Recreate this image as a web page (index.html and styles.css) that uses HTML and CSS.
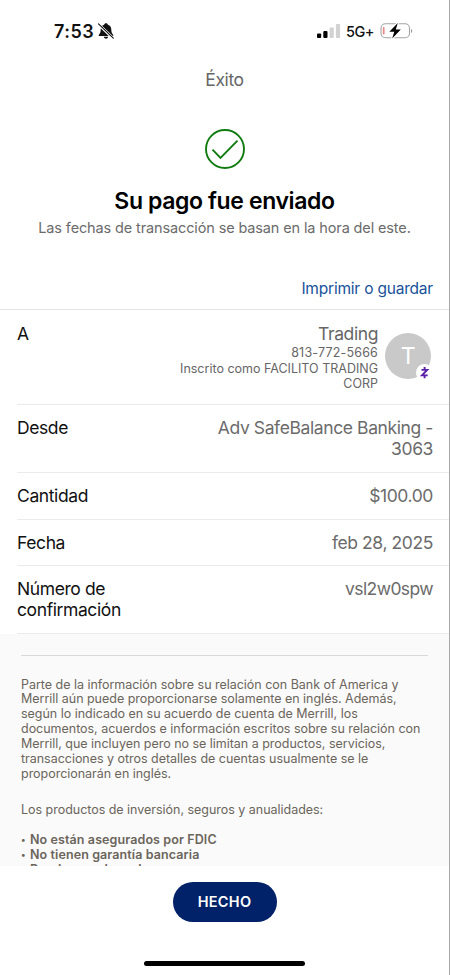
FILE: index.html
```html
<!DOCTYPE html>
<html lang="es">
<head>
<meta charset="utf-8">
<title>Éxito</title>
<link rel="stylesheet" href="styles.css">
</head>
<body>
<div class="phone">
  <header class="status">
    <span class="time">7:53</span>
    <svg class="bell" width="18" height="18" viewBox="0 0 18 18">
      <path d="M9 1.200c-1 0-1.700.6-1.900 1.500C4.800 3.400 3.700 5.200 3.700 7.500c0 3-.7 4-1.800 5.200-.5.6-.2 1.400.6 1.400h13c.8 0 1.100-.8.6-1.400C15 11.500 14.300 10.500 14.300 7.500c0-2.300-1.100-4.100-3.400-4.800C10.700 1.800 10 1.200 9 1.200zM6.800 14.800h4.400c-.1 1.100-1.100 1.900-2.200 1.900s-2.100-.8-2.200-1.900z" fill="#111"/>
      <path d="M1.500 2.200l14.800 14.300" stroke="#fff" stroke-width="2.800"/>
      <path d="M1.500 1.900l14.800 14.300" stroke="#111" stroke-width="1.100" stroke-linecap="round"/>
    </svg>
    <svg class="signal" width="24" height="16" viewBox="0 0 24 16">
      <rect x="0" y="10.500" width="4.200" height="4.500" rx="1" fill="#000"/>
      <rect x="6.300" y="8" width="4.200" height="7" rx="1" fill="#000"/>
      <rect x="12.600" y="4.500" width="4.200" height="10.500" rx="1" fill="#d2d2d2"/>
      <rect x="18.900" y="1" width="4.200" height="14" rx="1" fill="#d2d2d2"/>
    </svg>
    <span class="net">5G+</span>
    <svg class="battery" width="34" height="18" viewBox="0 0 34 18">
      <rect x="1" y="1.800" width="28.500" height="14" rx="4.500" fill="#fff" stroke="#a4a4a4" stroke-width="1.100"/>
      <path d="M31 7v4c1.600-.6 1.600-3.400 0-4z" fill="#999"/>
      <rect x="2.800" y="5" width="1.800" height="7.500" rx=".8" fill="#ee8b8b"/>
      <path d="M17.800 1L9.300 9.800h5L12.200 16.500 20.800 7.600h-5z" fill="#000" stroke="#fff" stroke-width="2.400" paint-order="stroke"/>
    </svg>
  </header>

  <div class="title"><span>Éxito</span></div>

  <section class="hero">
    <svg class="check" width="40" height="40" viewBox="0 0 40 40" fill="none" stroke="#107c10" stroke-width="1.900">
      <circle cx="20" cy="20" r="19"/>
      <path d="M7.500 20.700l8 8.100L32.500 11.700"/>
    </svg>
    <h1>Su pago fue enviado</h1>
    <p>Las fechas de transacción se basan en la hora del este.</p>
  </section>

  <div class="actions"><a>Imprimir o guardar</a></div>

  <main class="rows">
    <div class="row payee">
      <span class="label">A</span>
      <div class="who">
        <span class="name">Trading</span>
        <span class="num">813-772-5666</span>
        <span class="reg">Inscrito como FACILITO TRADING<br>CORP</span>
      </div>
      <div class="avatar">T
        <svg class="badge" width="17" height="17" viewBox="0 0 17 17">
          <circle cx="8.500" cy="8.500" r="8.500" fill="#fff"/>
          <path d="M5.500 5.900h5.700L6 11.400h5.700M8.600 3v2.900M8.600 11.400v2.900" fill="none" stroke="#5b21a8" stroke-width="1.900"/>
        </svg>
      </div>
    </div>
    <div class="row from"><span class="label">Desde</span><span class="value acct">Adv SafeBalance Banking -<br>3063</span></div>
    <div class="row"><span class="label">Cantidad</span><span class="value">$100.00</span></div>
    <div class="row"><span class="label">Fecha</span><span class="value date">feb 28, 2025</span></div>
    <div class="row conf"><span class="label">Número de<br>confirmación</span><span class="value code">vsl2w0spw</span></div>
  </main>

  <section class="legal">
    <hr>
    <p>Parte de la información sobre su relación con Bank of America y<br>Merrill aún puede proporcionarse solamente en inglés. Además,<br>según lo indicado en su acuerdo de cuenta de Merrill, los<br>documentos, acuerdos e información escritos sobre su relación con<br>Merrill, que incluyen pero no se limitan a productos, servicios,<br>transacciones y otros detalles de cuentas usualmente se le<br>proporcionarán en inglés.</p>
    <p>Los productos de inversión, seguros y anualidades:</p>
    <ul>
      <li>No están asegurados por FDIC</li>
      <li>No tienen garantía bancaria</li>
      <li>Pueden perder valor</li>
    </ul>
  </section>

  <footer class="bottom">
    <button>HECHO</button>
    <div class="home"></div>
  </footer>
</div>
</body>
</html>
```
FILE: styles.css
```css
* { box-sizing: border-box; }
body { margin: 0; background: #fff; font-family: Inter, "Liberation Sans", sans-serif; }
.phone {
  width: 450px; height: 975px; overflow: hidden;
  display: flex; flex-direction: column;
  border-right: 1px solid #a9a9a9; color: #111; white-space: nowrap;
}
.status { height: 62px; flex: none; display: flex; align-items: center; padding: 0 35px 0 54px; }
.time { font-size: 18px; font-weight: 600; letter-spacing: .5px; }
.bell { margin-left: 3px; }
.signal { margin-left: auto; }
.net { font-size: 14.500px; font-weight: 500; margin: 1px 6px 0 5px; letter-spacing: -.5px; }
.title { height: 35px; margin-bottom: 1px; flex: none; display: flex; align-items: center; justify-content: center; font-size: 17.500px; letter-spacing: -.4px; color: #666; }
.hero { flex: none; height: 167px; padding-top: 31px; display: flex; flex-direction: column; align-items: center; }
.hero h1 { margin: 16px 0 0; font-size: 23px; line-height: 32px; font-weight: 600; letter-spacing: -.38px; color: #000; }
.hero p { margin: 0; font-size: 14.500px; line-height: 22px; letter-spacing: -.13px; color: #6b6b6b; }
.actions { flex: none; height: 44px; display: flex; justify-content: flex-end; padding: 14px 16px 0 0; font-size: 15.500px; line-height: 20px; letter-spacing: -.2px; color: #17529a; }
.rows { flex: none; border-top: 1px solid #e4e4e4; }
.row {
  display: flex; justify-content: space-between; margin-left: 17px; padding: 12px 16px 0 0;
  height: 46.500px; border-bottom: 1px solid #ebebeb; font-size: 17.500px; line-height: 21px; letter-spacing: -.4px;
}
.label { color: #111; }
.value { color: #6b6b6b; text-align: right; }
.code { letter-spacing: -.6px; }
.payee { height: 94.500px; padding: 13px 18px 0 0; }
.payee .label { margin-right: auto; }
.who { display: flex; flex-direction: column; align-items: flex-end; text-align: right; color: #666; }
.num { font-size: 12.500px; line-height: 17px; letter-spacing: .18px; }
.reg { font-size: 12.500px; line-height: 15px; letter-spacing: 0; }
.avatar {
  position: relative; width: 46px; height: 46px; border-radius: 50%; margin: 10px 0 0 7px;
  background: #c9c9c9; color: #fff; font-size: 23px; line-height: 46px; text-align: center;
}
.badge { position: absolute; right: -2px; bottom: -2px; }
.from { height: 68.500px; }
.conf { height: 67.500px; }
.legal { flex: 1; min-height: 0; overflow: hidden; background: #fafafa; padding: 21px 21px 0; font-size: 12.500px; line-height: 14.900px; letter-spacing: -.025px; color: #6b655b; }
.legal hr { margin: 0 0 22px; border: 0; border-top: 1px solid #d9d9d9; }
.legal p { margin: 0 0 21.500px; }
.legal p + p { margin-bottom: 15px; }
.legal ul { margin: 0; padding: 0; list-style: none; font-weight: 600; letter-spacing: .1px; }
.legal li { display: flex; }
.legal li::before { content: "•"; width: 9px; font-size: 9px; }
.bottom { flex: none; height: 109px; background: #fff; display: flex; flex-direction: column; align-items: center; padding-top: 16px; }
.bottom button {
  width: 104px; height: 40px; border: 0; border-radius: 20px; background: #012169; color: #fff;
  font: 600 14.500px/40px Inter, "Liberation Sans", sans-serif; letter-spacing: .3px; padding: 0;
}
.home { width: 161px; height: 5px; border-radius: 3px; background: #000; margin-top: 39px; }
```
